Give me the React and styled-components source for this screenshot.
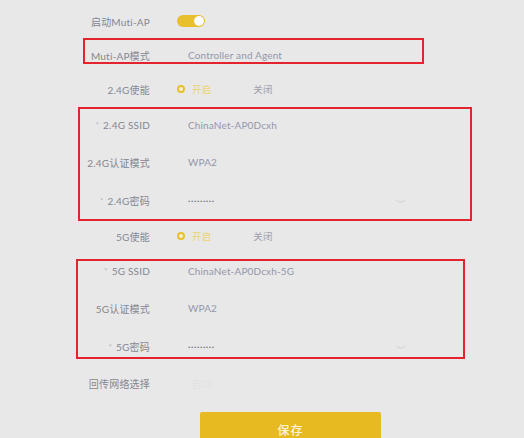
import React from "react";
import styled, { createGlobalStyle } from "styled-components";

const Global = createGlobalStyle`
  html, body { margin: 0; padding: 0; background: #e8e8e8; }
  body { font-family: Lato, "Noto Sans CJK SC", sans-serif; }
`;

const Page = styled.div`
  position: relative;
  width: 524px;
  height: 438px;
  overflow: hidden;
  background: #e8e8e8;
  padding-top: 4px;
  box-sizing: border-box;
`;

const Form = styled.div`
  display: flex;
  flex-direction: column;
`;

const Row = styled.div`
  display: grid;
  grid-template-columns: 150px 1fr;
  column-gap: 27px;
  align-items: center;
  height: ${(p) => p.$h}px;
`;

const Label = styled.div`
  text-align: right;
  font-size: 10px;
  color: #858692;
  white-space: nowrap;
  letter-spacing: 0.2px;
`;

const Star = styled.span`
  color: #b8b8c0;
  font-size: 8px;
  margin-right: 4px;
  vertical-align: 1px;
`;

const Value = styled.div`
  display: flex;
  align-items: center;
  padding-left: ${(p) => (p.$inset ? 11 : 0)}px;
  font-size: 10px;
  color: #9496a8;
  white-space: nowrap;
  letter-spacing: 0.15px;
  position: relative;
`;

const Dots = styled.span`
  font-size: 10px;
  font-weight: 700;
  letter-spacing: 0.6px;
  color: #6c6d7c;
  margin-top: -5px;
`;

const Chevron = styled.svg`
  position: absolute;
  left: 218px;
  top: 50%;
  margin-top: -1px;
`;

const Toggle = styled.div`
  width: 28px;
  height: 12px;
  border-radius: 6px;
  background: #e8bf2c;
  position: relative;
  &::after {
    content: "";
    position: absolute;
    right: 1px;
    top: 1px;
    width: 10px;
    height: 10px;
    border-radius: 50%;
    background: #fbfbfb;
  }
`;

const RadioGroup = styled.div`
  display: flex;
  align-items: center;
`;

const RadioDot = styled.span`
  width: 4px;
  height: 4px;
  border-radius: 50%;
  border: 2.5px solid #e9c02c;
  background: #f6f0d8;
  margin-right: 7px;
`;

const RadioText = styled.span`
  font-size: 9.5px;
  color: ${(p) => (p.$on ? "#ecd472" : "#a0a1ad")};
  margin-right: ${(p) => (p.$on ? 42 : 0)}px;
`;

const Faint = styled.span`
  color: #e2e2e4;
  font-size: 10px;
  padding-left: 4px;
`;

const ButtonRow = styled.div`
  display: flex;
  padding-left: 200px;
  margin-top: 11px;
`;

const SaveButton = styled.button`
  width: 181px;
  height: 34px;
  border: none;
  border-radius: 2px;
  background: #e8ba22;
  color: #fbf4dc;
  font-family: "Noto Sans CJK SC", sans-serif;
  font-size: 12px;
  font-weight: 500;
  letter-spacing: 1px;
  padding-top: 2px;
`;

const Annotation = styled.div`
  position: absolute;
  left: ${(p) => p.$x}px;
  top: ${(p) => p.$y}px;
  width: ${(p) => p.$w}px;
  height: ${(p) => p.$h}px;
  box-sizing: border-box;
  border: 2px solid #e3242f;
  pointer-events: none;
`;

const ChevronIcon = () => (
  <Chevron width="11" height="5" viewBox="0 0 11 5">
    <path d="M1 1 Q5.5 5 10 1" fill="none" stroke="#d2d2d6" strokeWidth="1" />
  </Chevron>
);

const Radio = () => (
  <RadioGroup>
    <RadioDot />
    <RadioText $on>开启</RadioText>
    <RadioText>关闭</RadioText>
  </RadioGroup>
);

export default function App() {
  return (
    <>
      <Global />
      <Page>
        <Form>
          <Row $h={34}>
            <Label>启动Muti-AP</Label>
            <Value>
              <Toggle />
            </Value>
          </Row>
          <Row $h={34}>
            <Label>Muti-AP模式</Label>
            <Value $inset>Controller and Agent</Value>
          </Row>
          <Row $h={34}>
            <Label>2.4G使能</Label>
            <Value>
              <Radio />
            </Value>
          </Row>
          <Row $h={37}>
            <Label>
              <Star>*</Star>2.4G SSID
            </Label>
            <Value $inset>ChinaNet-AP0Dcxh</Value>
          </Row>
          <Row $h={38}>
            <Label>2.4G认证模式</Label>
            <Value $inset>WPA2</Value>
          </Row>
          <Row $h={38}>
            <Label>
              <Star>*</Star>2.4G密码
            </Label>
            <Value $inset>
              <Dots>.........</Dots>
              <ChevronIcon />
            </Value>
          </Row>
          <Row $h={34}>
            <Label>5G使能</Label>
            <Value>
              <Radio />
            </Value>
          </Row>
          <Row $h={36}>
            <Label>
              <Star>*</Star>5G SSID
            </Label>
            <Value $inset>ChinaNet-AP0Dcxh-5G</Value>
          </Row>
          <Row $h={38}>
            <Label>5G认证模式</Label>
            <Value $inset>WPA2</Value>
          </Row>
          <Row $h={38}>
            <Label>
              <Star>*</Star>5G密码
            </Label>
            <Value $inset>
              <Dots>.........</Dots>
              <ChevronIcon />
            </Value>
          </Row>
          <Row $h={36}>
            <Label>回传网络选择</Label>
            <Value $inset>
              <Faint>自动</Faint>
            </Value>
          </Row>
          <ButtonRow>
            <SaveButton>保存</SaveButton>
          </ButtonRow>
        </Form>
        <Annotation $x={83} $y={38} $w={341} $h={26} />
        <Annotation $x={78} $y={107} $w={394} $h={114} />
        <Annotation $x={76} $y={259} $w={389} $h={100} />
      </Page>
    </>
  );
}
